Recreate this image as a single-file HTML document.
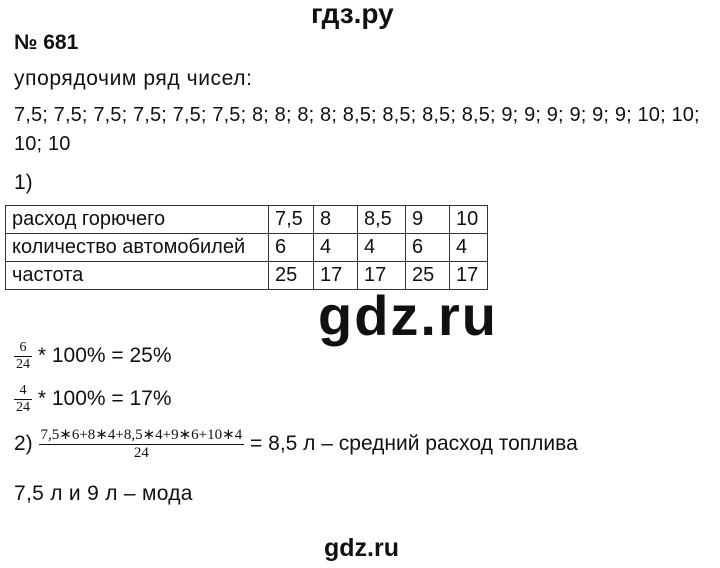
<html><head><style>
body{margin:0;width:720px;height:568px;background:#fff;position:relative;font-family:"Liberation Sans",sans-serif;color:#111;overflow:hidden}
.a{position:absolute;white-space:nowrap;font-size:21px;line-height:1}
table{position:absolute;left:5px;top:205px;border-collapse:collapse;font-size:20px}
td{border:1.5px solid #333;height:26px;padding:0 0 0 6px;line-height:27px}
.f{display:inline-block;vertical-align:middle;text-align:center;font-family:"Liberation Serif",serif;font-size:14px;line-height:1}
.f span{display:block;padding:1px 2px}
.f span:first-child{border-bottom:1.5px solid #111}
</style></head><body>
<div class="a" style="left:311px;top:0px;font-weight:bold;font-size:28px">гдз.ру</div>
<div class="a" style="left:14px;top:32px;font-weight:bold">№ 681</div>
<div class="a" style="left:14px;top:68px;letter-spacing:0.6px">упорядочим ряд чисел:</div>
<div class="a" style="left:14px;top:105px;font-size:20px;letter-spacing:0.15px">7,5; 7,5; 7,5; 7,5; 7,5; 7,5; 8; 8; 8; 8; 8,5; 8,5; 8,5; 8,5; 9; 9; 9; 9; 9; 9; 10; 10;</div>
<div class="a" style="left:14px;top:134px;font-size:20px;letter-spacing:0.15px">10; 10</div>
<div class="a" style="left:14px;top:172px">1)</div>
<table>
<tr><td style="width:256px">расход горючего</td><td style="width:38px">7,5</td><td style="width:37px">8</td><td style="width:41px">8,5</td><td style="width:37px">9</td><td style="width:31px">10</td></tr>
<tr><td>количество автомобилей</td><td>6</td><td>4</td><td>4</td><td>6</td><td>4</td></tr>
<tr><td>частота</td><td>25</td><td>17</td><td>17</td><td>25</td><td>17</td></tr>
</table>
<div class="a" style="left:318px;top:288px;font-weight:bold;font-size:56px;letter-spacing:2px">gdz.ru</div>
<div class="a" style="left:14px;top:340px"><span class="f"><span>6</span><span>24</span></span> * 100% = 25%</div>
<div class="a" style="left:14px;top:383px"><span class="f"><span>4</span><span>24</span></span> * 100% = 17%</div>
<div class="a" style="left:14px;top:427px;letter-spacing:0px">2) <span class="f" style="font-size:15px;letter-spacing:0"><span>7,5∗6+8∗4+8,5∗4+9∗6+10∗4</span><span>24</span></span> = 8,5 л – средний расход топлива</div>
<div class="a" style="left:14px;top:483px;letter-spacing:0.3px">7,5 л и 9 л – мода</div>
<div class="a" style="left:324px;top:536px;font-weight:bold;font-size:25px">gdz.ru</div>
</body></html>
